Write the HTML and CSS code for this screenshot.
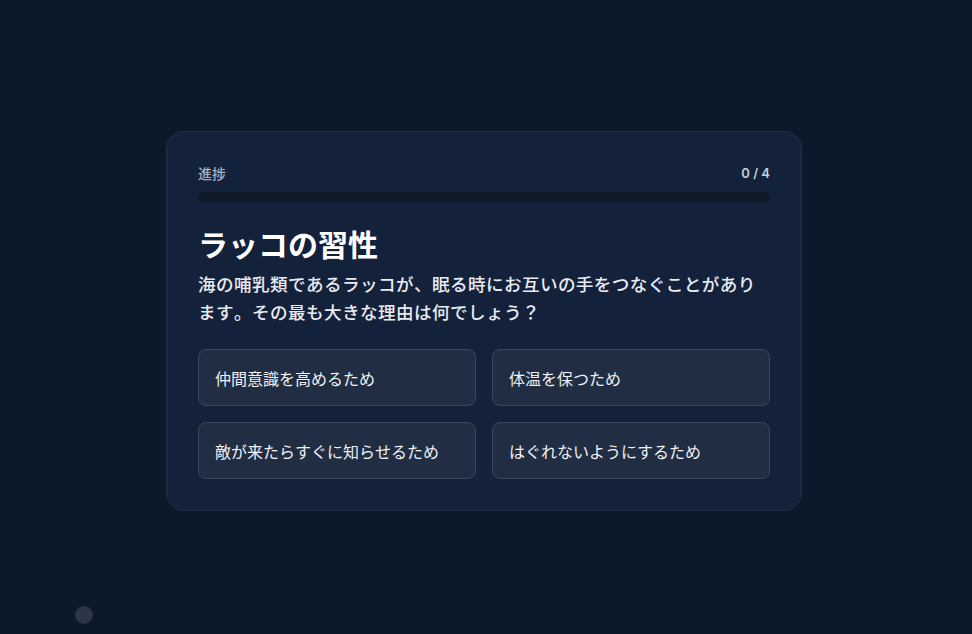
FILE: index.html
```html
<!DOCTYPE html>
<html lang="ja">
<head>
<meta charset="utf-8">
<title>ラッコの習性</title>
<link rel="stylesheet" href="styles.css">
</head>
<body>
<main class="stage">
  <section class="card">
    <div class="progress-head">
      <span class="progress-label">進捗</span>
      <span class="progress-count">0 / 4</span>
    </div>
    <div class="progress-track"><div class="progress-fill" style="width:0%"></div></div>
    <h1 class="title">ラッコの習性</h1>
    <p class="question">海の哺乳類であるラッコが、眠る時にお互いの手をつなぐことがあります。その最も大きな理由は何でしょう？</p>
    <div class="options">
      <button class="option">仲間意識を高めるため</button>
      <button class="option">体温を保つため</button>
      <button class="option">敵が来たらすぐに知らせるため</button>
      <button class="option">はぐれないようにするため</button>
    </div>
  </section>
</main>
<div class="dot"></div>
</body>
</html>
```

FILE: styles.css
```css
* { box-sizing: border-box; }
html, body {
  margin: 0;
  height: 100%;
}
body {
  background: #0c192a;
  font-family: "Noto Sans CJK JP", "Noto Sans", sans-serif;
  font-kerning: none;
  color: #f1f4f8;
  overflow: hidden;
}
.stage {
  display: flex;
  justify-content: center;
  padding: 131px 4px 0 0;
}
.card {
  width: 636px;
  background: #14213a;
  border: 1px solid #223049;
  border-radius: 18px;
  padding: 31px 31px 31px;
}
.progress-head {
  display: flex;
  justify-content: space-between;
  align-items: center;
  height: 20px;
  font-size: 14px;
  line-height: 20px;
  font-weight: 500;
}
.progress-label {
  color: #a9b2c0;
}
.progress-count {
  font-family: "Inter", "Noto Sans", sans-serif;
  font-size: 13px;
  font-weight: 600;
  color: #c6cdd8;
}
.progress-track {
  margin-top: 9px;
  height: 10px;
  border-radius: 5px;
  background: #0f1a29;
  overflow: hidden;
}
.progress-fill {
  height: 100%;
  background: #3b82f6;
}
.title {
  margin: 24px 0 0;
  font-size: 30px;
  line-height: 34px;
  font-weight: 700;
  color: #ffffff;
}
.question {
  margin: 10px 0 0;
  font-size: 17.6px;
  line-height: 28px;
  letter-spacing: 0.4px;
  font-weight: 500;
  color: #e8ecf2;
}
.options {
  margin-top: 23px;
  display: grid;
  grid-template-columns: 1fr 1fr;
  gap: 16px;
}
.option {
  height: 57px;
  padding: 0 16px;
  text-align: left;
  font-family: "Noto Sans CJK JP", "Noto Sans", sans-serif;
  font-kerning: none;
  font-size: 16px;
  line-height: 24px;
  color: #eef1f6;
  background: #212d42;
  border: 1px solid #3a475b;
  border-radius: 8px;
}
.dot {
  position: fixed;
  left: 75px;
  top: 606px;
  width: 18px;
  height: 18px;
  border-radius: 50%;
  background: #2b3548;
}
```
